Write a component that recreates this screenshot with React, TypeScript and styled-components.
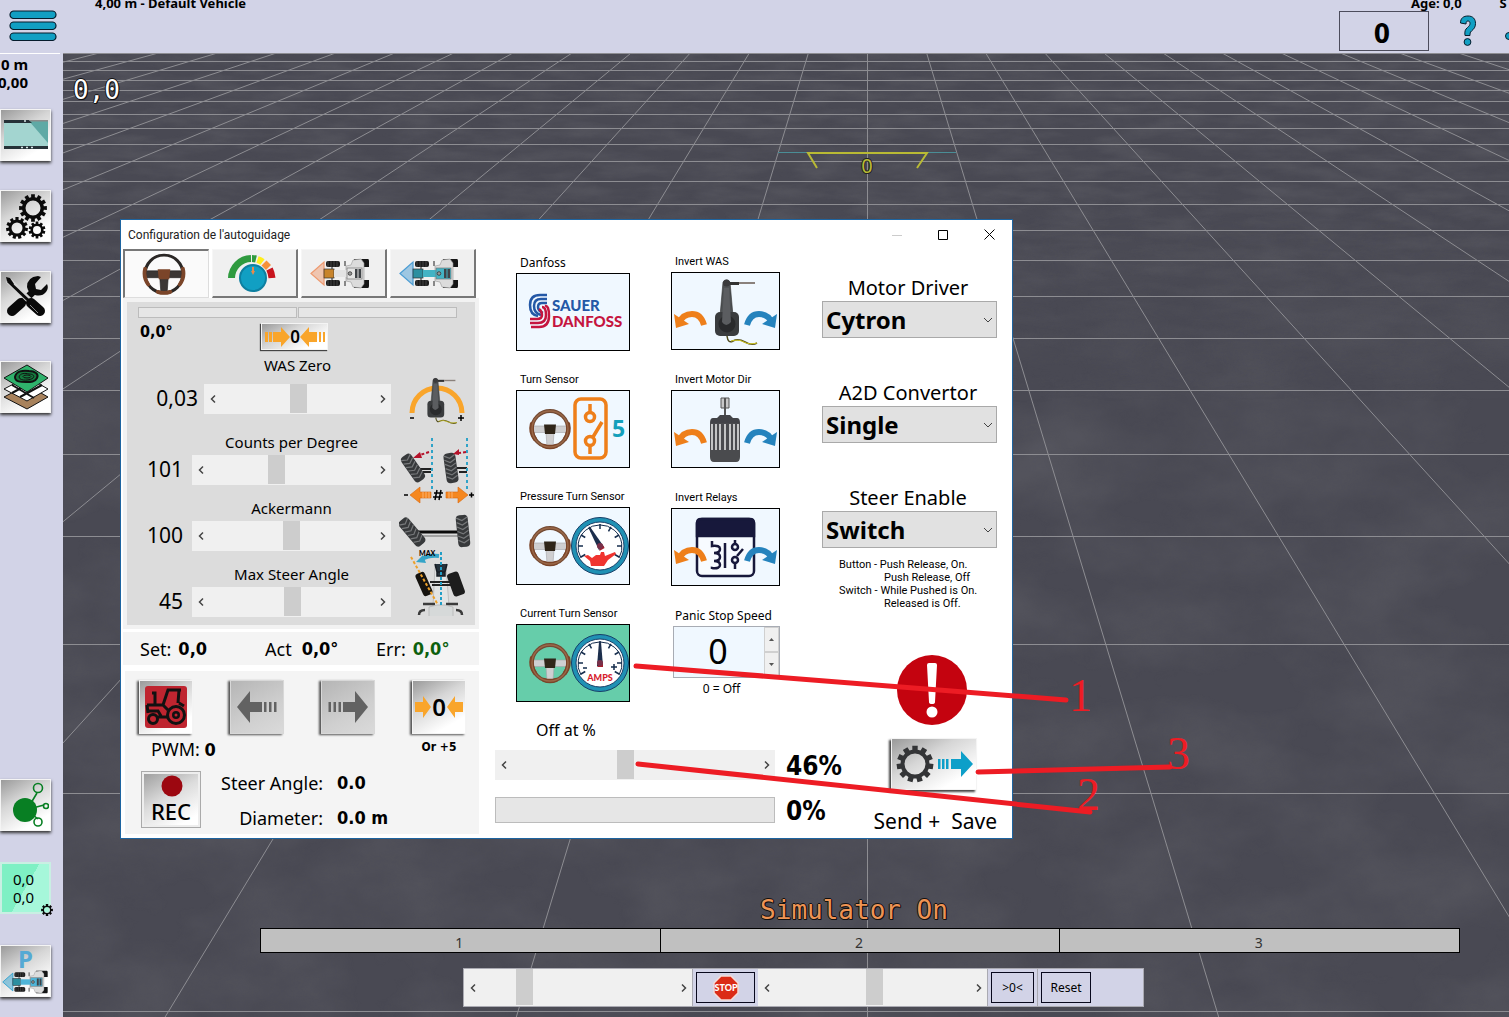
import React, { useState } from "react";
import styled, { createGlobalStyle, css } from "styled-components";

const ui = `"Noto Sans", "DejaVu Sans", sans-serif`;
const strongUi = `"DejaVu Sans Condensed", "DejaVu Sans", sans-serif`;
const smallUi = `Roboto, "Noto Sans", sans-serif`;
const mono = `"DejaVu Sans Mono", monospace`;

const Global = createGlobalStyle`
  *, *::before, *::after { box-sizing: border-box; }
  html, body { margin: 0; height: 100%; overflow: hidden; }
  body { font-family: ${ui}; font-size: 16px; line-height: 20px; color: #000; background: #d2d3e7; }
  button, input, select { font: inherit; color: inherit; margin: 0; }
  svg { display: block; }
  strong { font-family: ${strongUi}; }
`;

/* ---------- drawings ---------- */

const polar = (cx: number, cy: number, r: number, a: number) =>
  `${(cx + r * Math.cos(a)).toFixed(2)} ${(cy + r * Math.sin(a)).toFixed(2)}`;

function gearPath(cx: number, cy: number, outer: number, body: number, hole: number, teeth: number) {
  const step = (Math.PI * 2) / teeth;
  const pts: string[] = [];
  for (let i = 0; i < teeth; i++) {
    const a = i * step - Math.PI / 2;
    pts.push(
      polar(cx, cy, body, a - step * 0.32),
      polar(cx, cy, outer, a - step * 0.26),
      polar(cx, cy, outer, a + step * 0.26),
      polar(cx, cy, body, a + step * 0.32)
    );
  }
  return `M${pts.join("L")}Z M${cx - hole} ${cy}a${hole} ${hole} 0 1 0 ${hole * 2} 0a${hole} ${hole} 0 1 0 ${-hole * 2} 0Z`;
}

const Gear = (p: { cx: number; cy: number; outer: number; body: number; hole: number; teeth: number; fill?: string }) => (
  <path d={gearPath(p.cx, p.cy, p.outer, p.body, p.hole, p.teeth)} fillRule="evenodd" fill={p.fill ?? "#0a0a0a"} />
);

const MenuIcon = () => (
  <svg width="48" height="32" viewBox="0 0 48 32" fill="#119fc3" stroke="#061c2c" strokeWidth="1.2">
    {[1, 12, 23].map((y) => <rect key={y} x="1" y={y} width="46" height="7.500" rx="3.700" />)}
  </svg>
);

const HelpIcon = () => (
  <svg width="18" height="32" viewBox="0 0 18 32" fill="#119fc3" stroke="#061c2c" strokeWidth="1">
    <path d="M1.500 8C1.500 3 4.500 1 9 1c5 0 7.500 3 7.500 7.500 0 3.500-1.500 5.500-4 7.500-1.500 1.200-1.500 2.500-1.500 4.500H6c-.5-4 0-6 2.500-8 1.700-1.400 2.500-2.500 2.500-4 0-1.700-.8-2.500-2-2.500-1.500 0-2 1-2 3Z" />
    <circle cx="8.500" cy="27" r="3.400" />
  </svg>
);

const DisplayIcon = () => (
  <svg width="46" height="32" viewBox="0 0 46 32">
    <rect x="1" y="2" width="44" height="28" fill="#a3d5d0" />
    <path d="M26 2h19v22Z" fill="#5fa9a5" />
    <path d="M1 1h25l3 3H1ZM1 27h44v3H1Z" fill="#263238" />
    <path d="M26 1h19v1.500H28Z" fill="#8b8b8b" />
    <path d="M18 28.500h14M21 2h3" stroke="#d8e8e8" strokeWidth="1.500" strokeDasharray="2 3" />
  </svg>
);

const GearsIcon = () => (
  <svg width="46" height="48" viewBox="0 0 46 48">
    <Gear cx={30} cy={16} outer={14} body={11} hole={7.500} teeth={12} />
    <Gear cx={14} cy={36} outer={11} body={8.500} hole={5.500} teeth={11} />
    <Gear cx={34} cy={38} outer={8.500} body={6.500} hole={4} teeth={10} />
  </svg>
);

const ToolsIcon = () => (
  <svg width="46" height="46" viewBox="0 0 46 46">
    <path d="m9 38 22-21" stroke="#0a0a0a" strokeWidth="7" />
    <path d="m9 37 9-8" stroke="#0a0a0a" strokeWidth="10" strokeLinecap="round" />
    <path d="m35 2 3 1-6 7 1 5 5 1 6-6q2 4-1 8-4 5-11 3-7-2-8-8 0-10 11-11Z" fill="#0a0a0a" />
    <path d="m5 6 22 21" stroke="#d4d4d4" strokeWidth="6" />
    <path d="m5 7 21 20" stroke="#0a0a0a" strokeWidth="3" />
    <path d="m3 3 4 1 4 6-2 2-5-5Z" fill="#0a0a0a" />
    <path d="m28 29 9 8" stroke="#0a0a0a" strokeWidth="10" strokeLinecap="round" />
    <path d="m27 31 8 8" stroke="#888" strokeWidth="1" />
  </svg>
);

const LayersIcon = () => (
  <svg width="48" height="48" viewBox="0 0 48 48" stroke="#111" strokeWidth="1">
    <path d="m2 34 23-12 21 12-21 12Z" fill="#a8825c" />
    <path d="m2 26 23-12 21 12-21 12Z" fill="#fff" />
    <path d="m10 30 22-12M18 34l22-12M10 22l22 13" strokeWidth="2" />
    <path d="m2 15 23-13 21 13-21 14Z" fill="#2fb26c" />
    <path d="M13 14c1-6 8-7 14-6 6 0 10 3 8 7s-6 4-11 4-11 0-11-5Z" fill="#147a3e" strokeWidth="2" />
    <path d="M17 14c1-4 6-4 10-3 4 0 6 2 4 4s-13 4-14-1Z" fill="none" />
    <ellipse cx="25" cy="13.500" rx="4" ry="1.500" fill="none" />
  </svg>
);

const NodesIcon = () => (
  <svg width="46" height="46" viewBox="0 0 46 46" fill="none" stroke="#087f23" strokeWidth="1.600">
    <path d="m25 26 9-15M26 27l15-4M25 29l10 8" />
    <circle cx="22" cy="28" r="12" fill="#087f23" stroke="none" />
    <circle cx="35" cy="6" r="4.500" /><circle cx="43" cy="24" r="2.500" /><circle cx="35" cy="40" r="4" />
  </svg>
);

const TopTractor = ({ arrow, hood, rear, size = 62 }: { arrow: string; hood: string; rear: string; size?: number }) => (
  <svg width={size} height={size / 2} viewBox="0 0 62 31">
    <path d="M1 15.500 14 4v23Z" fill={arrow} fillOpacity=".5" stroke={arrow} strokeWidth="1.200" />
    <path d="M22 5v22M35 3v5M35 23v5" stroke="#444" strokeWidth="1.200" />
    <rect x="16" y="3" width="14" height="6" rx="2" fill="#1c1c1c" />
    <rect x="16" y="22" width="14" height="6" rx="2" fill="#1c1c1c" />
    <path d="M44 1h14q1 0 1 2v6h-5V5H44ZM44 30h14q1 0 1-2v-6h-5v4H44Z" fill="#151515" />
    <path d="M18 3v6m3-6v6m3-6v6m3-6v6M18 22v6m3-6v6m3-6v6m3-6v6" stroke="#555" strokeWidth=".7" />
    <path d="m36 8 5-1 2-5 8-1 3 4v21l-3 4-8-1-2-5-5-1Z" fill="#dcdcdc" stroke="#999" strokeWidth=".6" />
    <rect x="14" y="11" width="10" height="9" fill={hood} stroke="#333" strokeWidth=".7" />
    <rect x="24" y="12" width="14" height="7" fill={rear} />
    <rect x="37" y="10" width="15" height="11" fill={rear} stroke="#777" strokeWidth=".7" />
    <circle cx="40" cy="15.500" r="1.800" fill="#999" stroke="#333" strokeWidth=".8" />
    <path d="M45 11h2.500v9H45zM48.500 11H51v9h-2.500z" fill="#404448" />
  </svg>
);

const Wheel = ({ cx, cy, r, light }: { cx: number; cy: number; r: number; light?: boolean }) => (
  <g transform={`translate(${cx} ${cy}) scale(${r / 20})`}>
    <path d="M-17-3h34v6.500H4l-1 14h-6l-1-14h-13Z" fill={light ? "#cfcfd1" : "#3b3735"} stroke={light ? "#a5a5a8" : "#222"} strokeWidth=".6" />
    <circle r="18" fill="none" stroke={light ? "#744b34" : "#2a2725"} strokeWidth={light ? 3.8 : 2.8} />
    <path d="M-18-5a18 18 0 0 0 3 15M18-5a18 18 0 0 1-3 15M-6 17a18 18 0 0 0 12 0" fill="none" stroke="#7b4529" strokeWidth={light ? 4.4 : 3.6} strokeLinecap="round" />
    {light && <circle r="18" fill="none" stroke="#9a6848" strokeWidth="1.400" />}
    <path d="M-6-4.500H6L5 5H-5Z" fill={light ? "#2f2519" : "#7b4529"} />
  </g>
);

const WheelIcon = () => <svg width="44" height="44" viewBox="0 0 44 44"><Wheel cx={22} cy={22} r={21} /></svg>;

const GainIcon = () => (
  <svg width="50" height="38" viewBox="0 0 50 38" fill="none" strokeWidth="7">
    <path d="M4.500 24A20 20 0 0 1 24 4.500" stroke="#2f9a3f" />
    <path d="M25 4.500q2 0 4 .5" stroke="#2f9a3f" />
    <path d="M30.500 5.500q3 1 5 2.500" stroke="#ffee1c" />
    <path d="m37 9 4.500 4.500" stroke="#f5913a" />
    <path d="M42.500 15q2 4 2.500 9" stroke="#c8141e" />
    <circle cx="26" cy="24" r="13" fill="#119fc3" stroke="#0d7fa0" strokeWidth="2" />
    <path d="M26 13v6" stroke="#e78a4a" strokeWidth="2" />
    <path d="m24 17 2 4 2-4" fill="#e78a4a" stroke="none" />
  </svg>
);

const ZeroIcon = ({ wide }: { wide?: boolean }) =>
  wide ? (
    <svg width="64" height="24" viewBox="0 0 64 24" fill="#f9a52b">
      <path d="M2 7h3v10H2zM6 7h3v10H6zM10 7h8V2l9 10-9 10v-5h-8zM62 7h-2v10h2zM58 7h-2v10h2zM54 7h-8V2l-9 10 9 10v-5h8z" />
      <text x="32" y="18" textAnchor="middle" fontFamily={ui} fontWeight="600" fontSize="17" fill="#000">0</text>
    </svg>
  ) : (
    <svg width="50" height="40" viewBox="0 0 50 40" fill="#f9a52b">
      <path d="M1 15h8V9l8 11-8 11v-6H1zM49 15h-8V9l-8 11 8 11v-6h8z" />
      <text x="25" y="29" textAnchor="middle" fontFamily={ui} fontWeight="600" fontSize="24" fill="#000">0</text>
    </svg>
  );

const ArrowIcon = ({ right }: { right?: boolean }) => (
  <svg width="42" height="34" viewBox="0 0 42 34" fill="#626262">
    <path transform={right ? "translate(42 0) scale(-1 1)" : undefined} d="M1 17 14 1v11h12v10H14v11ZM28 12h2.500v10H28zM33 12h2.500v10H33zM38 12h2.500v10H38z" />
  </svg>
);

const TractorIcon = () => (
  <svg width="44" height="44" viewBox="0 0 44 44" fill="none" stroke="#111" strokeWidth="3">
    <rect x="1" y="1" width="42" height="42" rx="3" fill="#bf2530" stroke="none" />
    <path d="M3 20h16l5-15h11l-1 13M8 8h3v12M24 5h13M3 20l1 8M19 20l5 5M35 18l5 3" />
    <circle cx="32" cy="30" r="8.500" /><circle cx="32" cy="30" r="4" fill="#111" stroke="none" /><circle cx="32" cy="30" r="1.500" fill="#bf2530" stroke="none" />
    <circle cx="9" cy="34" r="4.500" />
    <path d="M14 32h9M4 26h10l3 5" />
  </svg>
);

const RecIcon = () => (
  <svg width="48" height="50" viewBox="0 0 48 50">
    <circle cx="25" cy="11" r="10.500" fill="#9c0710" />
    <text x="24" y="45" textAnchor="middle" fontFamily={ui} fontWeight="500" fontSize="22">REC</text>
  </svg>
);

const WasBody = () => (
  <>
    <path d="M24 5.500h12" stroke="#333" strokeWidth="3" /><path d="M36 5h16" stroke="#8a817c" strokeWidth="2" />
    <path d="M20 4q4-4 7 0l3 34h-13Z" fill="#4e5153" stroke="#2d2d2d" strokeWidth=".6" />
    <circle cx="23.500" cy="5" r="3.500" fill="#3a3a3c" />
    <rect x="12" y="34" width="24" height="24" rx="5" fill="#3a3c3e" />
    <circle cx="24" cy="46" r="8.500" fill="#292a2c" /><path d="M21 10 19 44q4 6 9 0L26 10Z" fill="#5b5d60" />
    <path d="M24 58q1 8 6 5t12 1 12 1" fill="none" stroke="#4f4a1c" strokeWidth="1.500" />
    <path d="M28 63q8-2 13 1t13 1" fill="none" stroke="#d2c821" strokeWidth="1" />
  </>
);

const WasIcon = () => (
  <svg width="56" height="48" viewBox="0 0 56 48">
    <path d="M3 36a25 25 0 0 1 50 0" fill="none" stroke="#f9a52b" strokeWidth="5" />
    <g transform="translate(10 0) scale(.7)"><WasBody /></g>
    <path d="M1 41h4M49 41h6M52 38v6" stroke="#000" strokeWidth="1.500" />
  </svg>
);

const Tire = ({ x, y, a, h = 30 }: { x: number; y: number; a: number; h?: number }) => (
  <g transform={`translate(${x} ${y}) rotate(${a})`}>
    <rect x="-6" y={-h / 2} width="12" height={h} rx="4" fill="#37393b" />
    {[-0.36, -0.22, -0.08, 0.06, 0.2, 0.34].map((f) => (
      <path key={f} d={`M-5.500 ${f * h - 2}l5.500 3 5.500-3`} fill="none" stroke="#77797b" strokeWidth="1.200" />
    ))}
  </g>
);

const CountsIcon = () => (
  <svg width="76" height="67" viewBox="0 0 76 67">
    <path d="M20 32h12M58 31h10M24 35h8M60 35h8" stroke="#222" strokeWidth="2" />
    <Tire x={14} y={31} a={-35} /><Tire x={52} y={31} a={-8} />
    <path d="M33 1v54M68 1v54" stroke="#2fa3c8" strokeWidth="2" strokeDasharray="3 3" />
    <path d="m30 15-9 3M67 15l-7 1" stroke="#b5122a" strokeWidth="2" strokeDasharray="3 2" />
    <path d="m14 21 7-6 2 6ZM54 17l6-5v6Z" fill="#b5122a" />
    <path d="M11 58l10-8v5h11v6H21v5ZM69 58l-10-8v5H47v6h12v5Z" fill="#f5871f" stroke="#d8660c" strokeWidth=".6" />
    <path d="M24 55v6M27 55v6M30 55v6M50 55v6M53 55v6" stroke="#fbb070" strokeWidth="1" />
    <path d="M5 58h4M70 58h5M72.500 55.500v5M35 56h9M34 60h9M38 53l-2 10M42 53l-2 10" stroke="#000" strokeWidth="1.500" />
  </svg>
);

const AckermannIcon = () => (
  <svg width="76" height="36" viewBox="0 0 76 36">
    <path d="M18 18h46" stroke="#0c0c0c" strokeWidth="3" /><path d="M20 22h42" stroke="#6c6c6c" strokeWidth="1" />
    <Tire x={13} y={18} a={-40} h={32} /><Tire x={64} y={17} a={-6} h={32} />
  </svg>
);

const MaxIcon = () => (
  <svg width="66" height="66" viewBox="0 0 66 66">
    <path d="M31 16h11l3 40H29Z" fill="#e2e4e4" stroke="#aaa" strokeWidth=".6" />
    <path d="M26 32h24M28 35h20" stroke="#222" strokeWidth="2" />
    <g transform="translate(20 34) rotate(-24)"><rect x="-5" y="-12" width="10" height="24" rx="3" fill="#15130f" /></g>
    <g transform="translate(52 34) rotate(-20)"><rect x="-6" y="-12" width="12" height="24" rx="3" fill="#1d1d1d" /></g>
    <path d="m31 14 2 8h8l2-8M33 22h8v4h-8Z" stroke="#171d24" strokeWidth="1.500" fill="#24313b" />
    <path d="M19 54h12M42 54h12M15 65q0-5 6-5M58 65q0-5-6-5" stroke="#3b3b3b" strokeWidth="2.500" fill="none" />
    <path d="M25 66v-9l8-2h8l8 2v9" fill="#d6d9d9" stroke="#aaa" strokeWidth=".6" />
    <path d="M37 2v53" stroke="#219ec6" strokeWidth="2" strokeDasharray="3 2" />
    <path d="m7 7 27 48" stroke="#eda12c" strokeWidth="2" strokeDasharray="3 2" />
    <path d="M35 6q-10-1-17 3" fill="none" stroke="#34a4c8" strokeWidth="4" /><path d="m12 12 7-7 3 8Z" fill="#34a4c8" />
    <text x="15" y="6" fontFamily="Lato, sans-serif" fontWeight="900" fontSize="7">MAX</text>
  </svg>
);

const DanfossIcon = () => (
  <svg width="112" height="50" viewBox="0 0 112 50" fill="none">
    <g stroke="#2458a6" strokeWidth="2.500"><path d="M30 16h-5q-4 0-4 4t5 6" /><path d="M30 12h-6q-7 0-7 7t7 9" /><path d="M30 8h-7Q13 8 13 18t8 11" /></g>
    <g stroke="#c5153f" strokeWidth="2.500"><path d="M13 32h7q5 0 5-4t-3-6" /><path d="M13 36h8q8 0 8-8t-4-8" /><path d="M14 40h8q10 0 10-11t-4-10" /></g>
    <text x="35" y="24" fontFamily="Lato, sans-serif" fontWeight="900" fontSize="15" fill="#2458a6">SAUER</text>
    <text x="35" y="40" fontFamily="Lato, sans-serif" fontWeight="900" fontSize="15" fill="#c5153f">DANFOSS</text>
  </svg>
);

const TurnSensorIcon = () => (
  <svg width="112" height="76" viewBox="0 0 112 76" fill="none" stroke="#ee7f1a" strokeWidth="3.500">
    <g stroke="none"><Wheel cx={33} cy={38} r={20} light /></g>
    <rect x="58" y="8" width="31" height="59" rx="6" />
    <circle cx="73" cy="26" r="4.500" /><circle cx="73" cy="50" r="4.500" />
    <path d="M73 13v9M73 54v9M76 46l9-15" />
    <text x="95" y="46" fontFamily={ui} fontWeight="700" fontSize="23" fill="#14a0bb" stroke="none">5</text>
  </svg>
);

const Dial = ({ needle }: { needle: number }) => (
  <g transform="translate(83 38)">
    <circle r="28.500" fill="#2091b4" stroke="#173f68" strokeWidth="1" />
    <circle r="24" fill="#fff" stroke="#173f68" strokeWidth="1" />
    <path d="M-19 12a22 22 0 1 1 38 0" fill="none" stroke="#152c4c" strokeWidth="1" />
    {[-120, -90, -60, -30, 0, 30, 60, 90, 120].map((a) => <path key={a} d="M0-22v5" stroke="#152c4c" strokeWidth="1.500" transform={`rotate(${a})`} />)}
    <g transform={`rotate(${needle})`}><path d="M-1-21h2L3 3h-6Z" fill="#1c2e4c" /><path d="M0 0h3v4h-6Z" fill="#a51f2d" /></g>
    <circle r="3" fill="#79304a" />
  </g>
);

const PressureIcon = () => (
  <svg width="112" height="76" viewBox="0 0 112 76">
    <Wheel cx={33} cy={38} r={20} light />
    <Dial needle={-30} />
    <path d="m67 48 4-1 4 3 4-3h4l1-3h3l1 4 10-4 1 2-8 6-4 6H74l-1-5Z" fill="#f0342f" />
  </svg>
);

const CurrentIcon = () => (
  <svg width="112" height="76" viewBox="0 0 112 76">
    <Wheel cx={33} cy={38} r={20} light />
    <Dial needle={0} />
    <path d="M66 43h4M94 42h6M97 39v6" stroke="#152c4c" strokeWidth="1.500" />
    <text x="83" y="56" textAnchor="middle" fontFamily="Lato, sans-serif" fontWeight="900" fontSize="9" fill="#d7202c">AMPS</text>
  </svg>
);

const Turns = () => (
  <>
    <path d="M7 50q4-9 13-9t12 11" fill="none" stroke="#ee7f1a" strokeWidth="6" /><path d="m2 41 2 14 13-4Z" fill="#ee7f1a" />
    <path d="M75 52q3-11 12-11t13 9" fill="none" stroke="#2583bd" strokeWidth="6" /><path d="m105 41-2 14-13-4Z" fill="#2583bd" />
  </>
);

const InvertWasIcon = () => (
  <svg width="107" height="76" viewBox="0 0 107 76"><Turns /><g transform="translate(31 5)"><WasBody /></g></svg>
);

const MotorIcon = () => (
  <svg width="107" height="76" viewBox="0 0 107 76">
    <Turns />
    <path d="M49 7h8v10h-8Z" fill="#c8c8c8" stroke="#555" /><path d="M53 7v19" stroke="#555" strokeWidth="2" />
    <path d="M48 24h10l3 3h4q3 0 3 5H38q0-5 3-5h4Z" fill="#434448" />
    <path d="M38 32h30v34q0 5-4 5H42q-4 0-4-5Z" fill="#4a4b4e" />
    {[39, 43, 47, 52, 57, 61, 65].map((x) => <path key={x} d={`M${x + 1} 33v26`} stroke="#ececec" strokeWidth="1.500" />)}
  </svg>
);

const RelayIcon = () => (
  <svg width="107" height="76" viewBox="0 0 107 76" fill="none" stroke="#17183b" strokeWidth="2.500">
    <rect x="25" y="10" width="57" height="57" rx="5" fill="#f7fbff" />
    <path d="M25 27V14q0-4 4-4h49q4 0 4 4v13Z" fill="#17183b" />
    <path d="M40 32v5q8-1 8 3t-6 4q6 0 6 4t-6 4q6 0 6 4t-8 3v1M53 34v25M63 31v4M63 55v5M65 47l6-7" />
    <circle cx="63" cy="38" r="3" /><circle cx="63" cy="51" r="3" />
    <g stroke="none"><Turns /></g>
  </svg>
);

const AlertIcon = () => (
  <svg width="72" height="72" viewBox="0 0 72 72" role="img" aria-label="Warning">
    <circle cx="36" cy="36" r="35" fill="#c4030f" />
    <path d="M31 11q0-2 2-2h6q2 0 2 2l-2 37q0 2-3 2t-3-2Z" fill="#fff" /><circle cx="36" cy="58" r="5.500" fill="#fff" />
  </svg>
);

const SendIcon = () => (
  <svg width="82" height="46" viewBox="0 0 82 46">
    <Gear cx={22} cy={23} outer={18.500} body={14.500} hole={10.500} teeth={11} fill="#333436" />
    <path d="M45 18h2.500v10H45zM49 18h2.500v10H49zM53 18h2.500v10H53zM58 18h10v-8l12 13-12 13v-8H58z" fill="#0d9fc9" />
  </svg>
);

const StopIcon = () => (
  <svg width="28" height="28" viewBox="0 0 28 28">
    <path d="M9 2h10l7 7v10l-7 7H9l-7-7V9Z" fill="#db2b17" stroke="#f4dcd8" strokeWidth="1.500" />
    <text x="14" y="17" textAnchor="middle" fontFamily="Lato, sans-serif" fontWeight="900" fontSize="9" fill="#fff">STOP</text>
  </svg>
);

const Chevron = ({ dir }: { dir: "left" | "right" | "down" }) => (
  <svg width="10" height="10" viewBox="0 0 10 10" fill="none" stroke="#444" strokeWidth={dir === "down" ? 1 : 1.5}>
    <path d={dir === "left" ? "M7 1.500 3.500 5 7 8.500" : dir === "right" ? "M3 1.500 6.500 5 3 8.500" : "M1 3l4 4 4-4"} />
  </svg>
);

const horizonY = -142;
const Ground = () => {
  const rows = Array.from({ length: 22 }, (_, k) => horizonY + 1 / (0.000867 + 0.0002026 * k));
  const lanes = Array.from({ length: 35 }, (_, i) => i - 17);
  return (
    <GroundSvg viewBox="63 53 1446 964" preserveAspectRatio="xMidYMin slice">
      <defs>
        <filter id="soil" x="0" y="0" width="100%" height="100%">
          <feTurbulence type="fractalNoise" baseFrequency=".009 .014" numOctaves="5" seed="8" />
          <feColorMatrix values="0 0 0 0 .12  0 0 0 0 .12  0 0 0 0 .14  1.400 0 0 0 -.45" />
        </filter>
        <filter id="soilFar" x="0" y="0" width="100%" height="100%">
          <feTurbulence type="fractalNoise" baseFrequency=".02 .08" numOctaves="5" seed="3" />
          <feColorMatrix values="0 0 0 0 .12  0 0 0 0 .12  0 0 0 0 .14  1.400 0 0 0 -.45" />
        </filter>
        <linearGradient id="nearFade" x1="0" y1="0" x2="0" y2="1"><stop offset="0" stopColor="#000" /><stop offset=".25" stopColor="#fff" /></linearGradient>
        <linearGradient id="farFade" x1="0" y1="0" x2="0" y2="1"><stop offset=".4" stopColor="#fff" /><stop offset="1" stopColor="#000" /></linearGradient>
        <mask id="near"><rect x="63" y="200" width="1446" height="817" fill="url(#nearFade)" /></mask>
        <mask id="far"><rect x="63" y="53" width="1446" height="350" fill="url(#farFade)" /></mask>
      </defs>
      <rect x="63" y="53" width="1446" height="964" fill="#494953" />
      <g mask="url(#near)"><rect x="63" y="200" width="1446" height="817" filter="url(#soil)" opacity=".6" /></g>
      <g mask="url(#far)"><rect x="63" y="53" width="1446" height="350" filter="url(#soilFar)" opacity=".6" /></g>
      <g stroke="#8d8d92" strokeWidth="1">
        {rows.map((y) => <path key={y} d={`M63 ${Math.round(y) + 0.5}H1509`} />)}
        {lanes.map((n) => <path key={n} d={`M${867.5 + n * 59.1} 53L${867.5 + n * 351.2} 1017`} />)}
      </g>
      <path d="M778 152.500h29M928 152.500h28" stroke="#4a8d96" />
      <path d="M817 168l-9-15h119l-10 15" fill="none" stroke="#b9ba34" strokeWidth="2" />
      <text x="867" y="173" textAnchor="middle" fontFamily={ui} fontSize="20" fill="#b9ba34" stroke="#222" strokeWidth="2" paintOrder="stroke">0</text>
    </GroundSvg>
  );
};

/* ---------- shell ---------- */

const Shell = styled.div`display: flex; flex-direction: column; height: 100vh; overflow: hidden;`;
const Header = styled.header`display: flex; height: 53px; flex: none; padding-left: 9px; overflow: hidden;`;
const PlainButton = styled.button`border: 0; padding: 0; background: none; display: block; flex: none;`;
const MenuButton = styled(PlainButton)`margin-top: 10px; align-self: flex-start;`;
const TopText = styled.span`font-size: 13px; font-weight: 700; line-height: 18px; margin-top: -6px; white-space: nowrap;`;
const VehicleName = styled(TopText)`margin-left: 38px;`;
const HeaderRight = styled.div`margin-left: auto; width: 170px; flex: none;`;
const StatusLine = styled.div`display: flex; height: 11px; padding-left: 72px; gap: 38px;`;
const HeaderTools = styled.div`display: flex; gap: 30px; height: 40px; align-items: center;`;
const SpeedBox = styled.output`
  width: 90px; flex: none; height: 40px; border: 1px solid #4c4c5c; text-align: center; padding-right: 4px;
  font-family: ${strongUi}; font-size: 26px; line-height: 44px; font-weight: 700;
`;
const EdgeDot = styled.span`width: 12px; height: 8px; border-radius: 4px; background: #119fc3; border: 1px solid #061c2c; flex: none; margin: 10px 0 0 -2px;`;

const Main = styled.div`display: flex; flex: 1; min-height: 0;`;
const Sidebar = styled.nav`
  width: 63px; flex: none; display: flex; flex-direction: column; justify-content: space-between; padding-bottom: 20px; overflow: hidden;
`;
const SideGroup = styled.div<{ $gap: number }>`display: flex; flex-direction: column; gap: ${(p) => p.$gap}px;`;
const FieldInfo = styled.div`
  height: 27px; font-size: 15px; line-height: 18px; font-weight: 700; border-top: 1px solid #fff; width: 60px; padding-top: 1px; white-space: nowrap;
  & span { display: block; padding-left: 1px; }
  & span + span { margin-left: -3px; }
`;
const metal = css`
  background: linear-gradient(150deg, #9a9a9a 0%, #d6d6d6 38%, #fff 80%);
  border: 1px solid #f4f4f4;
  box-shadow: 0 2px 3px #333;
`;
const SideButton = styled.button<{ $apart?: boolean }>`
  ${metal}
  width: 51px; height: 52px; padding: 0; display: grid; place-items: center; flex: none;
  margin-top: ${(p) => (p.$apart ? 9 : 0)}px;
`;
const RollButton = styled(SideButton)`
  background: linear-gradient(120deg, #7ef0c4 50%, #a6f7da 50%); box-shadow: none; border: 2px solid #c9efe3; line-height: 18px; font-size: 15px; grid-template-columns: 1fr;
`;
const RollValues = styled.span`display: block; grid-area: 1 / 1; padding-right: 4px;`;
const RollGear = styled.span`grid-area: 1 / 1; place-self: end; margin: 0 -4px -4px 0;`;
const ParkMark = styled.span`font-size: 24px; line-height: 22px; font-weight: 700; color: #55a9d4; height: 18px;`;

const Scene = styled.main`
  position: relative; flex: 1; min-width: 0; overflow: hidden;
  display: flex; flex-direction: column; justify-content: flex-end;
`;
const GroundSvg = styled.svg`position: absolute; inset: 0; width: 100%; height: 100%;`;
const outlined = css`
  font-family: ${mono}; font-size: 26px; line-height: 32px;
  text-shadow: 1px 0 #111, -1px 0 #111, 0 1px #111, 0 -1px #111, 1px 1px #111;
`;
const Offset = styled.span`${outlined} position: absolute; left: 10px; top: 21px; color: #fff;`;
const Hud = styled.div`position: relative; display: flex; flex-direction: column; padding: 0 49px 10px 197px;`;
const SimText = styled.p`${outlined} margin: 0 0 2px; align-self: center; padding-right: 12px; color: #ee9454;`;
const Sections = styled.div`display: grid; grid-template-columns: repeat(3, 1fr); border: 1px solid #000; border-width: 1px 0 1px 1px; background: #c0c0c0;`;
const Section = styled.button`
  border: 0; border-right: 1px solid #000; background: none; height: 23px; padding: 4px 2px 0 0; font-size: 14px; line-height: 18px; color: #333;
`;
const SimBar = styled.div`
  display: flex; align-items: stretch; height: 39px; width: 681px; margin: 15px 0 0 203px; background: #d2d3e7; border: 1px solid #aaaab2;
`;
const SimCell = styled.div`padding: 3px; border-left: 1px solid #aaaab2; display: flex;`;
const SimButton = styled.button<{ $w: number }>`
  width: ${(p) => p.$w}px; border: 1px solid #08081c; background: #d2d3e7; padding: 0; font-size: 12px; display: grid; place-items: center;
`;

/* ---------- scroll slider ---------- */

const ScrollBox = styled.div<{ $h: number; $w?: number }>`
  display: flex; height: ${(p) => p.$h}px; width: ${(p) => (p.$w ? `${p.$w}px` : "auto")}; background: #f0f0f0; min-width: 0;
  flex-shrink: ${(p) => (p.$w ? 0 : 1)};
`;
const StepButton = styled.button`width: 17px; flex: none; border: 0; padding: 0; background: none; display: grid; place-items: center;`;
const Range = styled.input<{ $h: number }>`
  appearance: none; flex: 1; min-width: 0; background: none; height: 100%;
  &::-webkit-slider-runnable-track { height: ${(p) => p.$h}px; }
  &::-webkit-slider-thumb { appearance: none; width: 17px; height: ${(p) => p.$h - 1}px; background: #cdcdcd; border: 0; border-radius: 0; }
`;

function Scroll({ id, label, start, h = 30, w }: { id: string; label?: string; start: number; h?: number; w?: number }) {
  const [value, setValue] = useState(start);
  return (
    <ScrollBox $h={h} $w={w}>
      <StepButton aria-label="Decrease" onClick={() => setValue(value - 1)}><Chevron dir="left" /></StepButton>
      <Range id={id} aria-label={label} type="range" min={0} max={100} value={value} $h={h} onChange={(e) => setValue(+e.target.value)} />
      <StepButton aria-label="Increase" onClick={() => setValue(value + 1)}><Chevron dir="right" /></StepButton>
    </ScrollBox>
  );
}

/* ---------- dialog ---------- */

const Dialog = styled.section`
  position: absolute; left: 57px; top: 166px; width: 893px; background: #fff; border: 1px solid #1d64a0;
`;
const TitleBar = styled.div`display: flex; align-items: center; height: 29px; padding-left: 7px;`;
const Title = styled.h1`margin: 0; font-family: ${smallUi}; font-size: 12px; line-height: 16px; font-weight: 400; flex: 1; color: #222;`;
const WinButton = styled(PlainButton)`width: 46px; height: 28px; display: grid; place-items: center;`;
const Columns = styled.div`display: flex; height: 589px;`;

const LeftPane = styled.div`width: 356px; flex: none; margin-left: 2px; display: flex; flex-direction: column;`;
const Tabs = styled.div`display: grid; grid-template-columns: repeat(4, 86px); gap: 3px; height: 49px;`;
const Tab = styled.button<{ $on?: boolean }>`
  padding: 0 6px 0 0; display: grid; place-items: center;
  background: ${(p) => (p.$on ? "#fafafa" : "#f0f0f0")};
  border-style: solid; border-width: ${(p) => (p.$on ? "2px 1px 1px 2px" : "1px 2px 2px 1px")};
  border-color: ${(p) => (p.$on ? "#777 #ddd #ddd #777" : "#f6f6f6 #777 #777 #f6f6f6")};
`;
const Panel = styled.div`background: #dcdcdc; border: 4px solid #f2f2f2; height: 331px; padding: 5px 0 0; display: flex; flex-direction: column;`;
const Bars = styled.div`display: grid; grid-template-columns: 1fr 1fr; gap: 1px; margin: 0 18px 0 11px;`;
const Bar = styled.div<{ $h: number }>`height: ${(p) => p.$h}px; background: #e6e6e6; border: 1px solid #bcbcbc;`;
const ZeroRow = styled.div`display: flex; height: 36px; padding: 5px 0 0 13px;`;
const Angle = styled.strong`width: 121px; font-size: 16px; line-height: 18px;`;
const ZeroButton = styled.button`${metal} box-shadow: -1px 1px 1px #444; width: 67px; height: 27px; padding: 0; display: grid; place-items: center;`;
const SettingsArea = styled.div`display: flex;`;
const Settings = styled.div`width: 264px; display: flex; flex-direction: column; gap: 12px;`;
const Setting = styled.div<{ $first?: boolean }>`
  display: grid; grid-template-columns: ${(p) => (p.$first ? 77 : 65)}px 1fr; row-gap: ${(p) => (p.$first ? 6 : 0)}px;
  margin-bottom: ${(p) => (p.$first ? 5 : 0)}px;
`;
const SettingLabel = styled.label`grid-column: 2; text-align: center; font-size: 15px; line-height: 22px; padding-bottom: 2px; white-space: nowrap;`;
const SettingValue = styled.output<{ $first?: boolean }>`
  font-size: 21px; line-height: 28px; text-align: right; padding-right: ${(p) => (p.$first ? 6 : 9)}px;
`;
const IconColumn = styled.div`flex: 1; display: flex; flex-direction: column; align-items: center; padding: 23px 0 0 8px;`;
const IconSlot = styled.div<{ $gap?: number }>`margin-top: ${(p) => p.$gap ?? 0}px;`;

const StatusRow = styled.div`
  display: grid; grid-template-columns: 125px 111px 1fr; background: #f4f4f4; height: 33px; margin-top: 3px; padding-left: 17px; align-items: center; font-size: 18px;
`;
const Reading = styled.span<{ $gap?: number; $green?: boolean }>`
  display: flex; gap: ${(p) => p.$gap ?? 7}px; white-space: nowrap;
  & strong { color: ${(p) => (p.$green ? "#0d600d" : "inherit")}; }
`;
const DrivePane = styled.div`background: #f4f4f4; margin: 6px 0 0 2px; height: 163px; padding: 9px 0 0 14px;`;
const DriveGrid = styled.div`display: grid; grid-template-columns: repeat(4, 54px); column-gap: 37px; row-gap: 5px; justify-items: center;`;
const DriveButton = styled.button<{ $dim?: boolean }>`
  ${metal} width: 54px; height: 54px; padding: 0; display: grid; place-items: center; box-shadow: -2px 1px 2px #555;
  ${(p) => p.$dim && css`background: linear-gradient(150deg, #b5b5b5, #cfcfcf 60%, #dadada); border-color: #d8d8d8;`}
`;
const Pwm = styled.span`grid-column: 1 / 4; justify-self: start; padding-left: 12px; font-size: 18px;`;
const Hint = styled.strong`font-size: 12px; line-height: 16px; white-space: nowrap;`;
const RecordRow = styled.div`display: flex; gap: 20px; margin-top: 11px; padding-left: 2px;`;
const RecButton = styled.button`
  width: 60px; height: 57px; flex: none; border: 1px solid #aaa; outline: 2px solid #eee; outline-offset: -3px; padding: 0; display: grid; place-items: center;
  background: linear-gradient(150deg, #9a9a9a, #dcdcdc 45%, #fff 85%);
`;
const Readouts = styled.dl`margin: 2px 0 0; display: grid; grid-template-columns: 102px auto; gap: 15px 14px; align-content: start; font-size: 18px;
  & dt { text-align: right; white-space: nowrap; }
  & dd { margin: 0; font-family: ${strongUi}; font-weight: 700; white-space: nowrap; }
`;

const MiddlePane = styled.div`width: 343px; flex: none; padding-left: 16px;`;
const TileColumns = styled.div`display: flex; gap: 41px; padding-left: 21px; height: 469px;`;
const TileColumn = styled.div<{ $gap: number; $top: number }>`display: flex; flex-direction: column; gap: ${(p) => p.$gap}px; padding-top: ${(p) => p.$top}px;`;
const TileBox = styled.div`display: flex; flex-direction: column;`;
const TileLabel = styled.label<{ $big?: boolean }>`
  font-family: ${(p) => (p.$big ? ui : smallUi)};
  font-size: ${(p) => (p.$big ? 12 : 11)}px; line-height: 20px; padding-left: 4px; white-space: nowrap; width: 104px;
`;
const Tile = styled.button<{ $w: number; $on?: boolean }>`
  width: ${(p) => p.$w}px; height: 78px; padding: 0; border: 1px solid #000; background: ${(p) => (p.$on ? "#66cdaa" : "#f0f8ff")};
  display: grid; place-items: center; overflow: hidden;
`;
const SpinBox = styled.div`display: flex; width: 107px; height: 52px; margin-left: 2px; border: 1px solid #a8acb4; background: #f0f8ff;`;
const SpinInput = styled.input`border: 0; background: none; width: 90px; padding: 0 2px 2px 0; text-align: center; font-size: 34px; outline: 0;`;
const SpinButtons = styled.div`display: grid; width: 15px; background: #f0f0f0;`;
const SpinButton = styled.button`border: 1px solid #d0d0d0; background: none; padding: 0; display: grid; place-items: center;`;
const SpinNote = styled.span`font-size: 12px; line-height: 22px; text-align: center; padding-right: 8px;`;
const OffLabel = styled.label`display: block; padding-left: 41px; font-size: 16px; line-height: 24px;`;
const MeterRow = styled.div<{ $top: number }>`display: flex; align-items: center; gap: 11px; height: 30px; margin-top: ${(p) => p.$top}px;`;
const MeterBar = styled(Bar)`width: 280px; flex: none;`;
const Percent = styled.output`font-family: ${strongUi}; font-size: 26px; line-height: 30px; padding-top: 2px; font-weight: 700;`;

const RightPane = styled.div`flex: none; width: 175px; padding-top: 26px; display: flex; flex-direction: column;`;
const Choice = styled.div`display: flex; flex-direction: column; height: 105px;`;
const ChoiceLabel = styled.label`font-size: 20px; line-height: 26px; text-align: center; padding-right: 3px;`;
const SelectBox = styled.div`display: grid; & > * { grid-area: 1 / 1; } & > svg { place-self: center end; margin-right: 4px; pointer-events: none; }`;
const Select = styled.select`
  appearance: none; height: 37px; width: 100%; border: 1px solid #a9a9a9; border-radius: 0; background: #e1e1e1; padding: 0 0 0 3px; font-size: 24px; font-weight: 700; line-height: 34px;
`;
const Help = styled.p`margin: -32px 0 0; padding-left: 17px; font-family: ${smallUi}; font-size: 11px; line-height: 13px; white-space: pre;`;
const HelpIndent = styled.span`padding-left: 45px;`;
const Actions = styled.div`display: flex; flex-direction: column; align-items: flex-end; margin-top: 44px;`;
const AlertSlot = styled.div`padding-right: 29px;`;
const SendButton = styled.button`${metal} width: 86px; height: 52px; margin: 12px 20px 0 0; padding: 0; display: grid; place-items: center; box-shadow: -2px 2px 2px #444;`;
const SendLabel = styled.span`font-size: 21px; line-height: 28px; margin-top: 17px; white-space: pre;`;

/* ---------- callouts drawn over the window ---------- */

const Callouts = styled.svg`position: absolute; left: 0; top: 0; width: 1200px; height: 800px; pointer-events: none;`;

const choices = [
  { id: "driver", label: "Motor Driver", options: ["Cytron", "IBT2"] },
  { id: "a2d", label: "A2D Convertor", options: ["Single", "Differential"] },
  { id: "enable", label: "Steer Enable", options: ["Switch", "Button", "None"] },
];

const sensors = [
  { id: "danfoss", label: "Danfoss", icon: <DanfossIcon />, big: true },
  { id: "turn", label: "Turn Sensor", icon: <TurnSensorIcon /> },
  { id: "pressure", label: "Pressure Turn Sensor", icon: <PressureIcon /> },
  { id: "current", label: "Current Turn Sensor", icon: <CurrentIcon />, on: true },
];

const inverts = [
  { id: "invWas", label: "Invert WAS", icon: <InvertWasIcon /> },
  { id: "invMotor", label: "Invert Motor Dir", icon: <MotorIcon /> },
  { id: "invRelay", label: "Invert Relays", icon: <RelayIcon /> },
];

const settings = [
  { id: "was", label: "WAS Zero", value: "0,03", pos: 51 },
  { id: "counts", label: "Counts per Degree", value: "101", pos: 40 },
  { id: "ackermann", label: "Ackermann", value: "100", pos: 50 },
  { id: "maxAngle", label: "Max Steer Angle", value: "45", pos: 51 },
];

function SteerDialog() {
  return (
    <Dialog role="dialog" aria-labelledby="dialog-title">
      <TitleBar>
        <Title id="dialog-title">Configuration de l'autoguidage</Title>
        <WinButton aria-label="Minimize"><svg width="10" height="10"><path d="M0 5.500h10" stroke="#ccc" /></svg></WinButton>
        <WinButton aria-label="Maximize"><svg width="10" height="10"><path d="M.5.5h9v9h-9Z" fill="none" stroke="#000" /></svg></WinButton>
        <WinButton aria-label="Close"><svg width="11" height="11"><path d="m.5.5 10 10M10.500.5l-10 10" stroke="#000" /></svg></WinButton>
      </TitleBar>
      <Columns>
        <LeftPane>
          <Tabs>
            <Tab $on aria-label="Steering"><WheelIcon /></Tab>
            <Tab aria-label="Gain"><GainIcon /></Tab>
            <Tab aria-label="Stanley"><TopTractor arrow="#ee9a70" hood="#c8842c" rear="#e4e4e4" /></Tab>
            <Tab aria-label="Pure pursuit"><TopTractor arrow="#4c9dd4" hood="#2b8fa0" rear="#43b3c4" /></Tab>
          </Tabs>
          <Panel>
            <Bars><Bar $h={11} /><Bar $h={11} /></Bars>
            <ZeroRow>
              <Angle>0,0°</Angle>
              <ZeroButton aria-label="Zero WAS"><ZeroIcon wide /></ZeroButton>
            </ZeroRow>
            <SettingsArea>
              <Settings>
                {settings.map((s, i) => (
                  <Setting key={s.id} $first={i === 0}>
                    <SettingLabel htmlFor={s.id}>{s.label}</SettingLabel>
                    <SettingValue $first={i === 0}>{s.value}</SettingValue>
                    <Scroll id={s.id} start={s.pos} />
                  </Setting>
                ))}
              </Settings>
              <IconColumn>
                <IconSlot><WasIcon /></IconSlot>
                <IconSlot $gap={12}><CountsIcon /></IconSlot>
                <IconSlot $gap={10}><AckermannIcon /></IconSlot>
                <IconSlot><MaxIcon /></IconSlot>
              </IconColumn>
            </SettingsArea>
          </Panel>
          <StatusRow>
            <Reading>Set: <strong>0,0</strong></Reading>
            <Reading $gap={10}>Act <strong>0,0°</strong></Reading>
            <Reading $green>Err: <strong>0,0°</strong></Reading>
          </StatusRow>
          <DrivePane>
            <DriveGrid>
              <DriveButton aria-label="Free drive"><TractorIcon /></DriveButton>
              <DriveButton $dim aria-label="Steer left"><ArrowIcon /></DriveButton>
              <DriveButton $dim aria-label="Steer right"><ArrowIcon right /></DriveButton>
              <DriveButton aria-label="Zero or plus five"><ZeroIcon /></DriveButton>
              <Pwm>PWM: <strong>0</strong></Pwm>
              <Hint>Or +5</Hint>
            </DriveGrid>
            <RecordRow>
              <RecButton aria-label="Record"><RecIcon /></RecButton>
              <Readouts>
                <dt>Steer Angle:</dt><dd>0.0</dd>
                <dt>Diameter:</dt><dd>0.0 m</dd>
              </Readouts>
            </RecordRow>
          </DrivePane>
        </LeftPane>
        <MiddlePane>
          <TileColumns>
            <TileColumn $gap={19} $top={4}>
              {sensors.map((s) => (
                <TileBox key={s.id}>
                  <TileLabel htmlFor={s.id} $big={s.big}>{s.label}</TileLabel>
                  <Tile id={s.id} $w={114} $on={s.on} aria-pressed={!!s.on}>{s.icon}</Tile>
                </TileBox>
              ))}
            </TileColumn>
            <TileColumn $gap={20} $top={3}>
              {inverts.map((s) => (
                <TileBox key={s.id}>
                  <TileLabel htmlFor={s.id}>{s.label}</TileLabel>
                  <Tile id={s.id} $w={109} aria-pressed={false}>{s.icon}</Tile>
                </TileBox>
              ))}
              <TileBox>
                <TileLabel htmlFor="panic" $big>Panic Stop Speed</TileLabel>
                <SpinBox>
                  <SpinInput id="panic" defaultValue="0" inputMode="numeric" />
                  <SpinButtons>
                    <SpinButton aria-label="Up"><svg width="5" height="3"><path d="M0 3 2.500 0 5 3Z" fill="#555" /></svg></SpinButton>
                    <SpinButton aria-label="Down"><svg width="5" height="3"><path d="M0 0h5L2.500 3Z" fill="#555" /></svg></SpinButton>
                  </SpinButtons>
                </SpinBox>
                <SpinNote>0 = Off</SpinNote>
              </TileBox>
            </TileColumn>
          </TileColumns>
          <OffLabel htmlFor="offAt">Off at %</OffLabel>
          <MeterRow $top={8}><Scroll id="offAt" start={46} w={280} /><Percent htmlFor="offAt">46%</Percent></MeterRow>
          <MeterRow $top={15}><MeterBar $h={26} /><Percent>0%</Percent></MeterRow>
        </MiddlePane>
        <RightPane>
          {choices.map((c) => (
            <Choice key={c.id}>
              <ChoiceLabel htmlFor={c.id}>{c.label}</ChoiceLabel>
              <SelectBox>
                <Select id={c.id}>{c.options.map((o) => <option key={o}>{o}</option>)}</Select>
                <Chevron dir="down" />
              </SelectBox>
            </Choice>
          ))}
          <Help>
            Button - Push Release, On.{"\n"}<HelpIndent>Push Release, Off</HelpIndent>{"\n"}
            Switch - While Pushed is On.{"\n"}<HelpIndent>Released is Off.</HelpIndent>
          </Help>
          <Actions>
            <AlertSlot><AlertIcon /></AlertSlot>
            <SendButton aria-label="Send and save"><SendIcon /></SendButton>
            <SendLabel>Send +  Save</SendLabel>
          </Actions>
        </RightPane>
      </Columns>
    </Dialog>
  );
}

export default function App() {
  return (
    <Shell>
      <Global />
      <Header>
        <MenuButton aria-label="Menu"><MenuIcon /></MenuButton>
        <VehicleName>4,00 m - Default Vehicle</VehicleName>
        <HeaderRight>
          <StatusLine><TopText>Age: 0,0</TopText><TopText>S</TopText></StatusLine>
          <HeaderTools>
            <SpeedBox>0</SpeedBox>
            <PlainButton aria-label="Help"><HelpIcon /></PlainButton>
            <EdgeDot />
          </HeaderTools>
        </HeaderRight>
      </Header>
      <Main>
        <Sidebar>
          <SideGroup $gap={29}>
            <FieldInfo><span>0 m</span><span>0,00</span></FieldInfo>
            <SideButton aria-label="Display"><DisplayIcon /></SideButton>
            <SideButton aria-label="Settings"><GearsIcon /></SideButton>
            <SideButton aria-label="Tools"><ToolsIcon /></SideButton>
            <SideButton $apart aria-label="Fields"><LayersIcon /></SideButton>
          </SideGroup>
          <SideGroup $gap={31}>
            <SideButton aria-label="Connections"><NodesIcon /></SideButton>
            <RollButton aria-label="Roll settings">
              <RollValues>0,0<br />0,0</RollValues>
              <RollGear><svg width="12" height="12" viewBox="0 0 12 12"><Gear cx={6} cy={6} outer={6} body={4.500} hole={3} teeth={8} /></svg></RollGear>
            </RollButton>
            <SideButton aria-label="Auto steer">
              <ParkMark>P</ParkMark>
              <TopTractor arrow="#35a3cf" hood="#2b8fa0" rear="#4fb5d8" size={48} />
            </SideButton>
          </SideGroup>
        </Sidebar>
        <Scene>
          <Ground />
          <Offset>0,0</Offset>
          <Hud>
            <SimText>Simulator On</SimText>
            <Sections>{[1, 2, 3].map((n) => <Section key={n}>{n}</Section>)}</Sections>
            <SimBar>
              <Scroll id="simSpeed" label="Simulator speed" start={20} h={37} w={228} />
              <SimCell><SimButton $w={59} aria-label="Stop"><StopIcon /></SimButton></SimCell>
              <Scroll id="simSteer" label="Simulator steering" start={51} h={37} w={229} />
              <SimCell><SimButton $w={43}>&gt;0&lt;</SimButton></SimCell>
              <SimCell><SimButton $w={50}>Reset</SimButton></SimCell>
            </SimBar>
          </Hud>
          <SteerDialog />
          <Callouts viewBox="63 53 1200 800">
            <g stroke="#ed1c24" strokeWidth="5" strokeLinecap="round">
              <path d="M636 666 1066 700M638 764 1090 812M978 772l192-5" />
            </g>
            <g fill="#ed1c24" fontFamily="'Liberation Serif', serif" fontSize="46">
              <text x="1069" y="711">1</text><text x="1077" y="810">2</text><text x="1167" y="769">3</text>
            </g>
          </Callouts>
        </Scene>
      </Main>
    </Shell>
  );
}
